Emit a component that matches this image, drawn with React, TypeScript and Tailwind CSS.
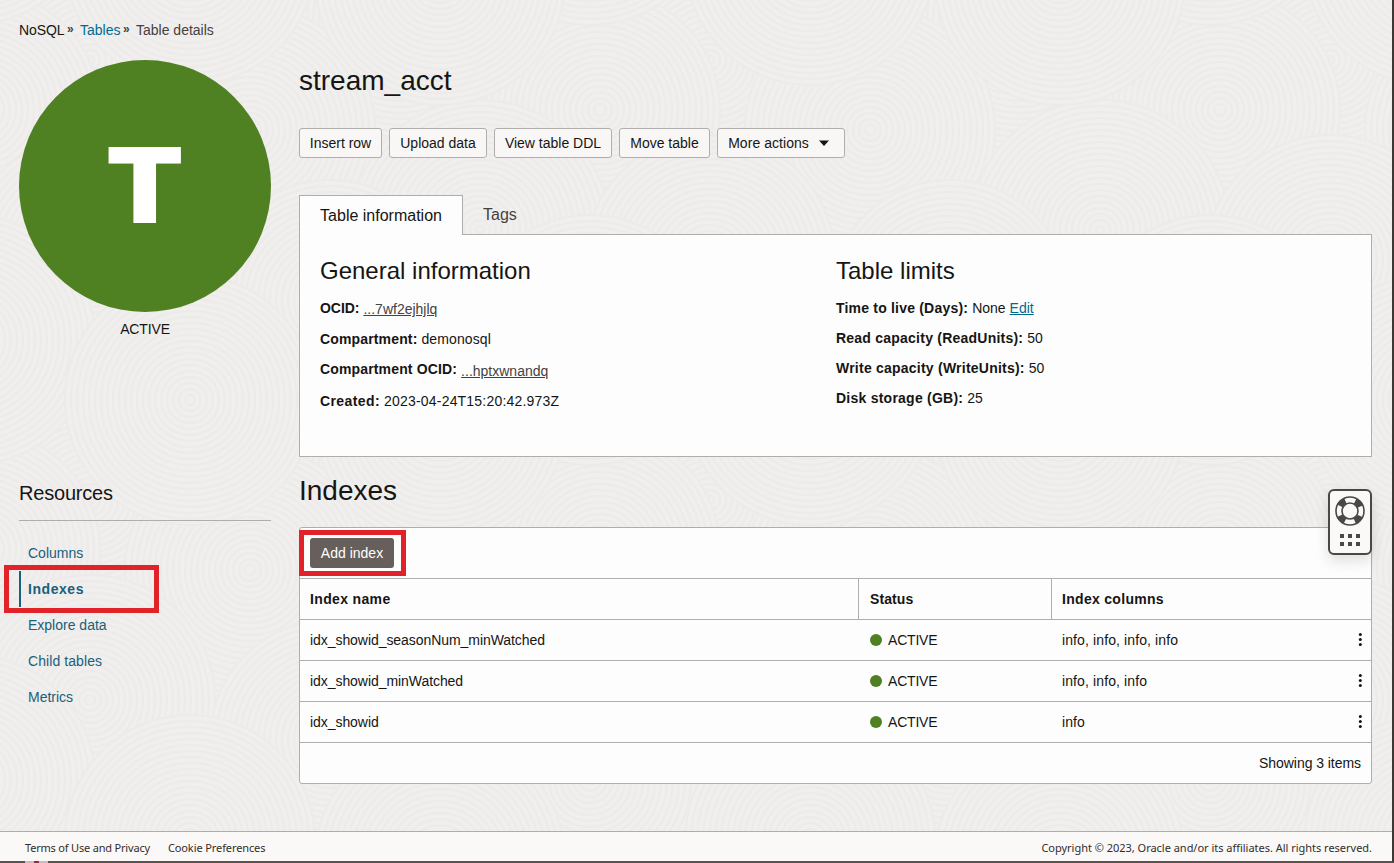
import React from "react";

const SWIRLS: [number, number, number][] = [
  [90, 60, 130], [400, 20, 135], [600, 110, 120], [250, 130, 125], [480, 230, 130],
  [90, 260, 125], [330, 300, 120], [590, 340, 125], [190, 400, 125], [440, 420, 125],
];

function Backdrop() {
  return (
    <svg className="absolute inset-0 h-full w-full" aria-hidden="true">
      <defs>
        <pattern id="swirl" width="620" height="440" patternUnits="userSpaceOnUse">
          <rect width="620" height="440" fill="#f0efed" />
          {SWIRLS.map(([x, y, r], i) =>
            [-620, 0, 620].map((dx) =>
              [-440, 0, 440].map((dy) => (
                <g key={`${i}${dx}${dy}`} fill="none" stroke="#edebe9" strokeWidth="2">
                  <circle cx={x + dx} cy={y + dy} r={r} fill="#f0efed" />
                  {Array.from({ length: Math.floor(r / 6) }, (_, k) => (
                    <circle key={k} cx={x + dx} cy={y + dy} r={r - (k + 1) * 6} />
                  ))}
                </g>
              )),
            ),
          )}
        </pattern>
      </defs>
      <rect width="100%" height="100%" fill="url(#swirl)" />
    </svg>
  );
}

const ACTIONS = [
  { label: "Insert row", width: "w-[83px]" },
  { label: "Upload data", width: "w-[98px]" },
  { label: "View table DDL", width: "w-[118px]" },
  { label: "Move table", width: "w-[91px]" },
];

const ROWS = [
  { name: "idx_showid_seasonNum_minWatched", cols: "info, info, info, info" },
  { name: "idx_showid_minWatched", cols: "info, info, info" },
  { name: "idx_showid", cols: "info" },
];

const buttonClass =
  "flex h-[30px] items-center justify-center rounded-[3px] border border-[#b0aeac] bg-[#f8f7f6] whitespace-nowrap";

type FieldProps = { label: string; children: React.ReactNode; className?: string; tracking?: string };

function Field({ label, children, className = "", tracking = "tracking-[0.15px]" }: FieldProps) {
  return (
    <div className={`flex h-5 gap-1 whitespace-nowrap ${className}`}>
      <span className={`font-bold ${tracking}`}>{label}</span>
      {children}
    </div>
  );
}

function HelpWidget() {
  return (
    <div className="absolute top-[489px] left-[1328px] flex h-[66px] w-11 flex-col items-center rounded-md border-2 border-[#4a4745] bg-[#fbf9f8] pt-[5px] shadow-[0_6px_14px_rgba(0,0,0,0.12)]">
      <svg width="30" height="30" viewBox="0 0 30 30" fill="none" stroke="#4a4745">
        <circle cx="15" cy="15" r="11.3" strokeWidth="6" strokeDasharray="7.5 10.25" strokeDashoffset="-5.125" />
        <circle cx="15" cy="15" r="14" strokeWidth="1.6" />
        <circle cx="15" cy="15" r="8" strokeWidth="1.6" />
      </svg>
      <svg className="mt-[8px]" width="20" height="12" viewBox="0 0 20 12" fill="#4a4745">
        {[0, 8, 16].map((x) => [0, 8].map((y) => <rect key={`${x}-${y}`} x={x} y={y} width="4" height="4" />))}
      </svg>
    </div>
  );
}

export default function App() {
  return (
    <div className="relative h-[863px] w-[1394px] overflow-hidden bg-[#f0eeec] font-['Liberation_Sans',Arial,sans-serif] text-sm leading-5 text-[#161513]">
      <Backdrop />
      <div className="relative flex h-full flex-col border-r-2 border-b-2 border-[#3c3836] border-b-[#5b5350]">
        <nav className="flex h-[60px] pt-5 pl-[19px] whitespace-nowrap">
          <span className="w-[45px] tracking-[-0.1px]">NoSQL</span>
          <span className="ml-[3px] w-[13px] pt-px text-xs font-bold text-[#45413f]">»</span>
          <a className="w-[40px] text-[#006b8f]">Tables</a>
          <span className="ml-[3px] w-[13px] pt-px text-xs font-bold text-[#45413f]">»</span>
          <span className="text-[#45413f]">Table details</span>
        </nav>

        <div className="flex min-h-0 flex-1 gap-7 pl-[19px]">
          <aside className="w-[252px]">
            <div className="flex h-[252px] items-center justify-center rounded-full bg-[#4f8022] pb-[2px] font-['Inter',sans-serif] text-[104px] leading-none font-black text-white">
              <span className="scale-x-110">T</span>
            </div>
            <div className="mt-[7px] text-center tracking-[-0.15px]">ACTIVE</div>
            <h2 className="mt-[142px] h-[40px] border-b border-[#b0aeac] text-xl leading-6 tracking-[-0.2px]">Resources</h2>
            <ul className="mt-[14px] text-[#19607c]">
              <li className="flex h-9 items-center pl-[9px]">Columns</li>
              <li className="relative flex h-9 items-center border-l-2 border-[#19607c] pl-[7px] font-bold tracking-[0.55px]">
                Indexes
                <span className="absolute -top-[6px] -left-[17px] h-12 w-[155px] border-[5px] border-[#e12229]" />
              </li>
              <li className="flex h-9 items-center pl-[9px]">Explore data</li>
              <li className="flex h-9 items-center pl-[9px] tracking-[0.08px]">Child tables</li>
              <li className="flex h-9 items-center pl-[9px]">Metrics</li>
            </ul>
          </aside>

          <main className="w-[1073px]">
            <h1 className="h-[68px] pt-[5px] text-[28px] leading-8">stream_acct</h1>
            <div className="flex gap-[7px]">
              {ACTIONS.map((a) => (
                <button key={a.label} className={`${buttonClass} ${a.width}`}>
                  {a.label}
                </button>
              ))}
              <button className={`${buttonClass} w-32 gap-[10px] pr-[5px] tracking-[0.05px]`}>
                More actions
                <svg width="10" height="6" viewBox="0 0 10 6" fill="#161513">
                  <path d="M0 .5h10L5 6z" />
                </svg>
              </button>
            </div>

            <div className="mt-[37px] flex h-[39px] text-base">
              <div className="relative z-10 flex h-10 w-[164px] items-center justify-center border border-b-0 border-[#b0aeac] bg-[#fdfdfd]">
                Table information
              </div>
              <div className="pt-2 pl-5 text-[#45413f]">Tags</div>
            </div>
            <section className="flex h-[223px] border border-[#b0aeac] bg-[#fdfdfd] pt-[21px] pl-5">
              <div className="w-[516px]">
                <h3 className="text-2xl leading-[30px]">General information</h3>
                <Field className="mt-3" label="OCID:" tracking="tracking-[-0.05px]">
                  <span className="mt-px text-[#45413f] underline">...7wf2ejhjlq</span>
                </Field>
                <Field className="mt-[11px]" label="Compartment:">
                  <span className="tracking-[0.1px]">demonosql</span>
                </Field>
                <Field className="mt-[10px]" label="Compartment OCID:">
                  <span className="mt-[2px] text-[#45413f] underline">...hptxwnandq</span>
                </Field>
                <Field className="mt-3" label="Created:" tracking="tracking-[0.4px]">
                  <span className="tracking-[0.2px]">2023-04-24T15:20:42.973Z</span>
                </Field>
              </div>
              <div>
                <h3 className="text-2xl leading-[30px]">Table limits</h3>
                <Field className="mt-3" label="Time to live (Days):" tracking="tracking-[0.2px]">
                  <span>None</span>
                  <a className="text-[#006b8f] underline">Edit</a>
                </Field>
                <Field className="mt-[10px]" label="Read capacity (ReadUnits):" tracking="tracking-[0.23px]">50</Field>
                <Field className="mt-[10px]" label="Write capacity (WriteUnits):" tracking="tracking-[0.23px]">50</Field>
                <Field className="mt-[10px]" label="Disk storage (GB):" tracking="tracking-[0.24px]">25</Field>
              </div>
            </section>

            <h2 className="h-[70px] pt-[18px] text-[28px] leading-8">Indexes</h2>
            <section className="rounded-[3px] border border-[#b0aeac] bg-[#fdfdfd]">
              <div className="flex h-[50px] items-center pl-[10px]">
                <div className="relative">
                  <button className="flex h-[30px] w-[84px] items-center justify-center rounded-[3px] bg-[#665f5b] whitespace-nowrap text-white">
                    Add index
                  </button>
                  <span className="absolute -top-2 -left-[11px] h-[46px] w-[107px] border-[5px] border-[#e12229]" />
                </div>
              </div>
              <div className="flex h-[41px] items-stretch border-t border-[#b0aeac] leading-10 font-bold tracking-[0.35px]">
                <div className="w-[558px] pl-[10px]">Index name</div>
                <div className="w-[193px] border-l border-[#b0aeac] pl-[11px] tracking-[0.1px]">Status</div>
                <div className="flex-1 border-l border-[#b0aeac] pl-[10px] tracking-[0.3px]">Index columns</div>
              </div>
              {ROWS.map((r) => (
                <div key={r.name} className="flex h-[41px] border-t border-[#b0aeac] leading-10">
                  <div className="w-[559px] pl-[10px] tracking-[-0.06px]">{r.name}</div>
                  <div className="flex w-[193px] items-center gap-[6px] pl-[11px] tracking-[-0.2px]">
                    <span className="size-3 rounded-full bg-[#4f8022]" />
                    ACTIVE
                  </div>
                  <div className="flex-1 pl-[10px] tracking-[0.11px]">{r.cols}</div>
                  <div className="flex items-center pr-[9px]">
                    <svg width="4" height="14" viewBox="0 0 4 14" fill="#161513">
                      <circle cx="2.3" cy="1.6" r="1.5" />
                      <circle cx="2.3" cy="6.6" r="1.5" />
                      <circle cx="2.3" cy="11.6" r="1.5" />
                    </svg>
                  </div>
                </div>
              ))}
              <div className="h-[41px] border-t border-[#b0aeac] pr-[10px] text-right leading-10 tracking-[-0.05px]">Showing 3 items</div>
            </section>
          </main>
        </div>

        <footer className="flex h-[30px] items-center justify-between border-t border-[#b0aeac] bg-[#fbf9f8] pt-[3px] pr-5 pl-[25px] font-['Noto_Sans',sans-serif] text-[11px] whitespace-nowrap text-[#312d2a]">
          <div className="flex gap-[18px] tracking-[-0.19px]">
            <span>Terms of Use and Privacy</span>
            <span className="tracking-[-0.1px]">Cookie Preferences</span>
          </div>
          <span className="tracking-[-0.02px]">Copyright © 2023, Oracle and/or its affiliates. All rights reserved.</span>
        </footer>
      </div>
      <span className="absolute bottom-0 left-[25px] h-[2px] w-[23px] border-x-[9px] border-[#c9bcc0] bg-[#8e2f4c]" />
      <HelpWidget />
    </div>
  );
}
